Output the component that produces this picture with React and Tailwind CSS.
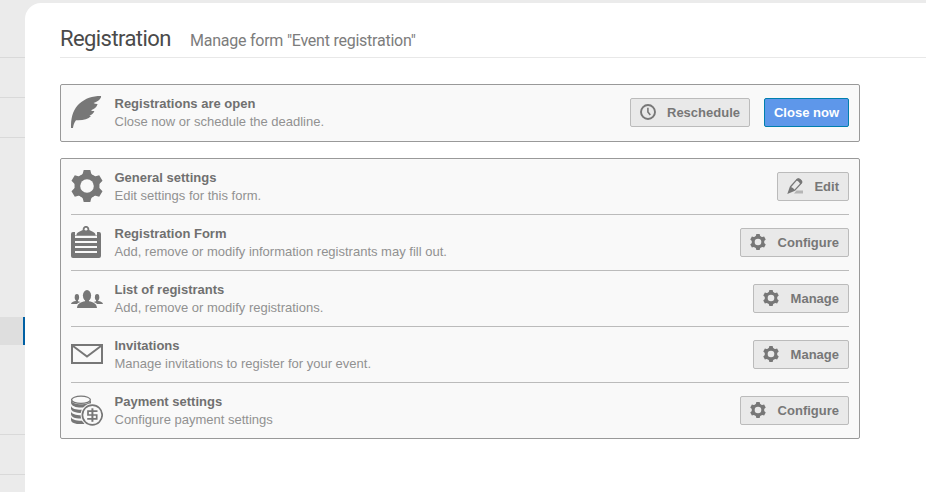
import React from 'react';

const TEETH = [0, 60, 120, 180, 240, 300];

function Gear({ size, hole, holeFill }) {
  return (
    <svg width={size} height={size} viewBox="0 0 32 32" className="block">
      <g fill="#777">
        {TEETH.map((a) => (
          <path key={a} d="M12.700 0H19.300L20.200 3.600Q20.600 4.600 22.600 5.600L21 9H11L9.400 5.600Q11.400 4.600 11.800 3.600Z" transform={`rotate(${a} 16 16)`} />
        ))}
        <circle cx="16" cy="16" r="11.600" />
      </g>
      <circle cx="16" cy="16" r={hole} fill={holeFill} />
    </svg>
  );
}

const GearLarge = () => <Gear size={32} hole={6.8} holeFill="#f9f9f9" />;
const GearSmall = () => <Gear size={16} hole={6.6} holeFill="#e9e9e9" />;

const Feather = () => (
  <svg width="32" height="32" viewBox="0 0 32 32" fill="#777" className="block">
    <path d="M0 32C-.300 22 2 13.500 8.500 7.500C14.500 2.300 21 0 30 0C30.600 2.500 27 5.700 22.500 7C23.500 7.600 25 8 26.600 7.900C25.800 11 23 13.300 20 14.200C21 14.800 21.900 15.200 23.400 15.100C22.400 17.700 20.500 19.200 18.500 19.700C19 20 19.500 20.200 20 20C17 23.500 12 24.500 5 24.200C3.200 26.500 2.300 29 2 32Z" />
  </svg>
);

const Clipboard = () => (
  <svg width="32" height="32" viewBox="0 0 32 32" className="block">
    <path d="M2 6H4V9.500H26V6H28Q30 6 30 8V30Q30 32 28 32H2Q0 32 0 30V8Q0 6 2 6Z" fill="#777" />
    <path d="M5.500 8.500C6 6 9 5.800 11.800 4A3.300 3.300 0 1 1 18.200 4C21 5.800 24 6 24.500 8.500V9.600H5.500Z" fill="#777" />
    <circle cx="15" cy="3.200" r="1.400" fill="#f9f9f9" />
    <path d="M4 11H26M4 16H26M4 21H26M4 26H26" stroke="#f9f9f9" strokeWidth="2" />
  </svg>
);

const People = () => (
  <svg width="32" height="32" viewBox="0 0 32 32" fill="#777" className="block">
    <ellipse cx="16" cy="13.600" rx="4.100" ry="5.600" />
    <path d="M14 17H18V19.300C22 20 25.500 21.400 26 26H6C6.500 21.400 10 20 14 19.300Z" />
    <ellipse cx="5.900" cy="15.300" rx="2.200" ry="3.300" />
    <path d="M4.800 17.500H7V19.300L9.500 20C7.500 20.800 6.500 21.400 6 22H0C.3 20.100 2.500 19.500 4.800 19.100Z" />
    <ellipse cx="26.100" cy="15.300" rx="2.200" ry="3.300" />
    <path d="M27.200 17.500H25V19.300L22.500 20C24.500 20.800 25.500 21.400 26 22H32C31.700 20.100 29.500 19.500 27.200 19.100Z" />
  </svg>
);

const Envelope = () => (
  <svg width="32" height="32" viewBox="0 0 32 32" fill="none" stroke="#777" strokeWidth="2" className="block">
    <path d="M1 7H31V25H1Z" />
    <path d="M2 8L16 18.500L30 8" />
  </svg>
);

const Coins = () => (
  <svg width="32" height="32" viewBox="0 0 32 32" className="block">
    <path d="M0 6C1 9 5 10.200 10 10.200S19 9 20 6V9.500C19 12.500 15 13.600 10 13.600S0 12 0 8.500Z" fill="#777" />
    <path d="M0 12C1 14.700 5 15.800 10 15.800S19 14.700 20 12V16L14 19C5 19.400 0 17.500 0 14.500Z" fill="#777" />
    <path d="M0 17.500C1 20.200 5 21.400 12 21.200V24.500C5 25 0 23.300 0 20Z" fill="#777" />
    <path d="M0 23C1 25.700 5 26.900 12 26.700L14 30C5 30.600 0 29 0 25.700Z" fill="#777" />
    <ellipse cx="10" cy="5.800" rx="9.400" ry="3.600" fill="#f9f9f9" stroke="#777" strokeWidth="1.300" />
    <circle cx="21.300" cy="21" r="11.700" fill="#f9f9f9" />
    <circle cx="21.300" cy="21" r="9.900" fill="#f9f9f9" stroke="#777" strokeWidth="1.700" />
    <path d="M26.500 17.200H17V21H25.700V24.800H16.200" fill="none" stroke="#777" strokeWidth="1.700" />
    <path d="M21.400 14.300V27.800" stroke="#777" strokeWidth="2" />
  </svg>
);

const Clock = () => (
  <svg width="16" height="16" viewBox="0 0 16 16" fill="none" stroke="#777" className="block">
    <circle cx="8" cy="8" r="7" strokeWidth="1.900" />
    <path d="M7.900 3.800V8L10.300 11" strokeWidth="1.600" />
  </svg>
);

const Pencil = () => (
  <svg width="16" height="16" viewBox="0 0 16 16" className="block">
    <path d="M7 15.500L9.500 12.500H16V15.500Z" fill="#b5b5b5" />
    <path d="M3.300 9L9.800 1.600Q11.200.5 12.600 1.300L14 2.500Q15.300 3.800 14.300 5.200L7.400 12.600" fill="none" stroke="#777" strokeWidth="1.300" />
    <path d="M9.600 1.200Q11.500 0 13.200 1.200T14.700 4.900L13.200 6.400Q12.700 3.600 9 2.200Z" fill="#777" />
    <path d="M2.800 8.800Q6.500 9.300 8 12.800L.3 15.900Z" fill="#777" />
  </svg>
);

function Button({ icon: Icon, children }) {
  return (
    <button className="flex h-[29px] items-center rounded-[2px] border border-[#bbb] bg-[#e9e9e9] px-[9px] text-[13px] font-bold leading-[15px] text-[#777]">
      <span className={Icon === GearSmall ? 'mr-[12px] pb-px' : 'mr-[11px] pb-px'}><Icon /></span>
      {children}
    </button>
  );
}

function Row({ icon: Icon, title, text, children }) {
  return (
    <div className="flex h-[55px] items-start">
      <div className="mt-[11px] w-[43.500px] shrink-0"><Icon /></div>
      <div className="mt-[10px] flex-1 text-[13px] leading-[18px] text-[#919191]">
        <h2 className="font-bold text-[#707070]">{title}</h2>
        <p>{text}</p>
      </div>
      <div className="mt-[13px] flex gap-[14px]">{children}</div>
    </div>
  );
}

const SETTINGS = [
  { icon: GearLarge, title: 'General settings', text: 'Edit settings for this form.', action: 'Edit', actionIcon: Pencil },
  { icon: Clipboard, title: 'Registration Form', text: 'Add, remove or modify information registrants may fill out.', action: 'Configure', actionIcon: GearSmall },
  { icon: People, title: 'List of registrants', text: 'Add, remove or modify registrations.', action: 'Manage', actionIcon: GearSmall },
  { icon: Envelope, title: 'Invitations', text: 'Manage invitations to register for your event.', action: 'Manage', actionIcon: GearSmall },
  { icon: Coins, title: 'Payment settings', text: 'Configure payment settings', action: 'Configure', actionIcon: GearSmall },
];

export default function App() {
  return (
    <div className="flex h-[492px] w-[926px] overflow-hidden bg-[#ebebeb] font-['Liberation_Sans',Arial,sans-serif]">
      <aside className="w-[25px] shrink-0">
        <div className="h-[58px] border-b border-[#d9d9d9]" />
        <div className="h-[40px] border-b border-[#d9d9d9]" />
        <div className="h-[40px] border-b border-[#d9d9d9]" />
        <div className="mt-[179px] h-[28px] border-r-2 border-[#0060a4] bg-[#dedede]" />
        <div className="h-[90px] border-b border-[#d9d9d9]" />
        <div className="h-[40px] border-b border-[#d9d9d9]" />
      </aside>
      <main className="mt-[3px] flex-1 rounded-tl-[16px] bg-white pl-[35px]">
        <header className="flex h-[55px] items-baseline border-b border-[#e8e8e8] pt-[22px] font-[Roboto,sans-serif]">
          <h1 className="w-[130px] shrink-0 whitespace-nowrap text-[22px] leading-[28px] tracking-[-0.58px] text-[#4a4a4a]">Registration</h1>
          <p className="whitespace-nowrap text-[16px] leading-[20px] tracking-[-0.24px] text-[#7c7c7c]">Manage form "Event registration"</p>
        </header>
        <section className="mt-[26px] h-[58px] w-[800px] rounded-[2px] border border-[#999] bg-[#f9f9f9] px-[10px]">
          <Row icon={Feather} title="Registrations are open" text="Close now or schedule the deadline.">
            <Button icon={Clock}>Reschedule</Button>
            <button className="h-[29px] rounded-[2px] border border-[#007fae] bg-[#5e97ea] px-[9px] text-[13px] font-bold leading-[15px] text-white">Close now</button>
          </Row>
        </section>
        <section className="mt-[16px] w-[800px] divide-y divide-[#bbb] rounded-[2px] border border-[#999] bg-[#f9f9f9] px-[10px]">
          {SETTINGS.map((s) => (
            <div key={s.title}>
              <Row icon={s.icon} title={s.title} text={s.text}>
                <Button icon={s.actionIcon}>{s.action}</Button>
              </Row>
            </div>
          ))}
        </section>
      </main>
    </div>
  );
}
